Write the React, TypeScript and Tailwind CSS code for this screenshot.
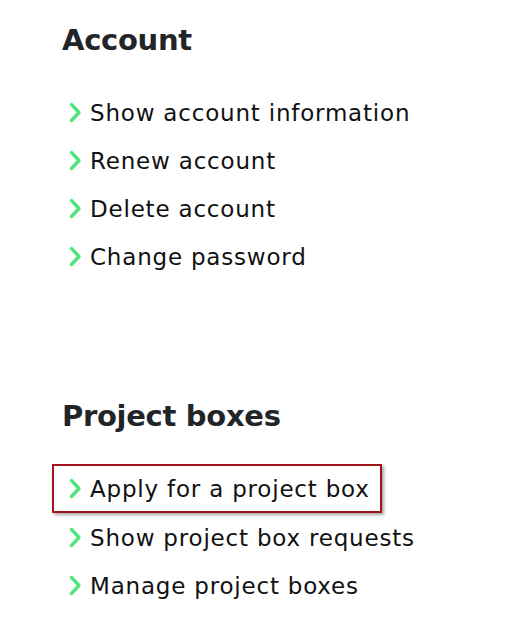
import React from "react";

const Chevron = () => (
  <svg width="13" height="21" viewBox="0 0 13 21" className="shrink-0" fill="none">
    <polyline
      points="2.5,2.5 10,10.5 2.5,18.5"
      stroke="#4fe67b"
      strokeWidth="3.4"
      strokeLinecap="round"
      strokeLinejoin="round"
    />
  </svg>
);

interface ItemProps {
  label: string;
  focused?: boolean;
}

function Item({ label, focused = false }: ItemProps) {
  if (focused) {
    return (
      <li className="-ml-[10px] flex h-[49px] w-[330px] items-center gap-[8px] border-2 border-[#a3141a] pl-[15px] shadow-[2px_2px_3px_rgba(0,0,0,0.35)]">
        <Chevron />
        <span className="pt-[2px] text-[23px] tracking-[0.8px] text-[#111]">{label}</span>
      </li>
    );
  }
  return (
    <li className="flex h-12 items-center gap-[8px] pl-[7px]">
      <Chevron />
      <span className="pt-[2px] text-[23px] tracking-[0.8px] text-[#111]">{label}</span>
    </li>
  );
}

export default function App() {
  return (
    <div className="min-h-[635px] bg-white pl-[62px] pt-[22px]" style={{ fontFamily: '"DejaVu Sans", sans-serif' }}>
      <section>
        <h2 className="mb-[30px] h-9 text-[29px] font-bold leading-9 tracking-[-0.3px] text-[#212529]">Account</h2>
        <ul>
          <Item label="Show account information" />
          <Item label="Renew account" />
          <Item label="Delete account" />
          <Item label="Change password" />
        </ul>
      </section>
      <section className="mt-[118px]">
        <h2 className="mb-[30px] h-9 text-[29px] font-bold leading-9 tracking-[-0.3px] text-[#212529]">Project boxes</h2>
        <ul>
          <Item label="Apply for a project box" focused />
          <Item label="Show project box requests" />
          <Item label="Manage project boxes" />
        </ul>
      </section>
    </div>
  );
}
